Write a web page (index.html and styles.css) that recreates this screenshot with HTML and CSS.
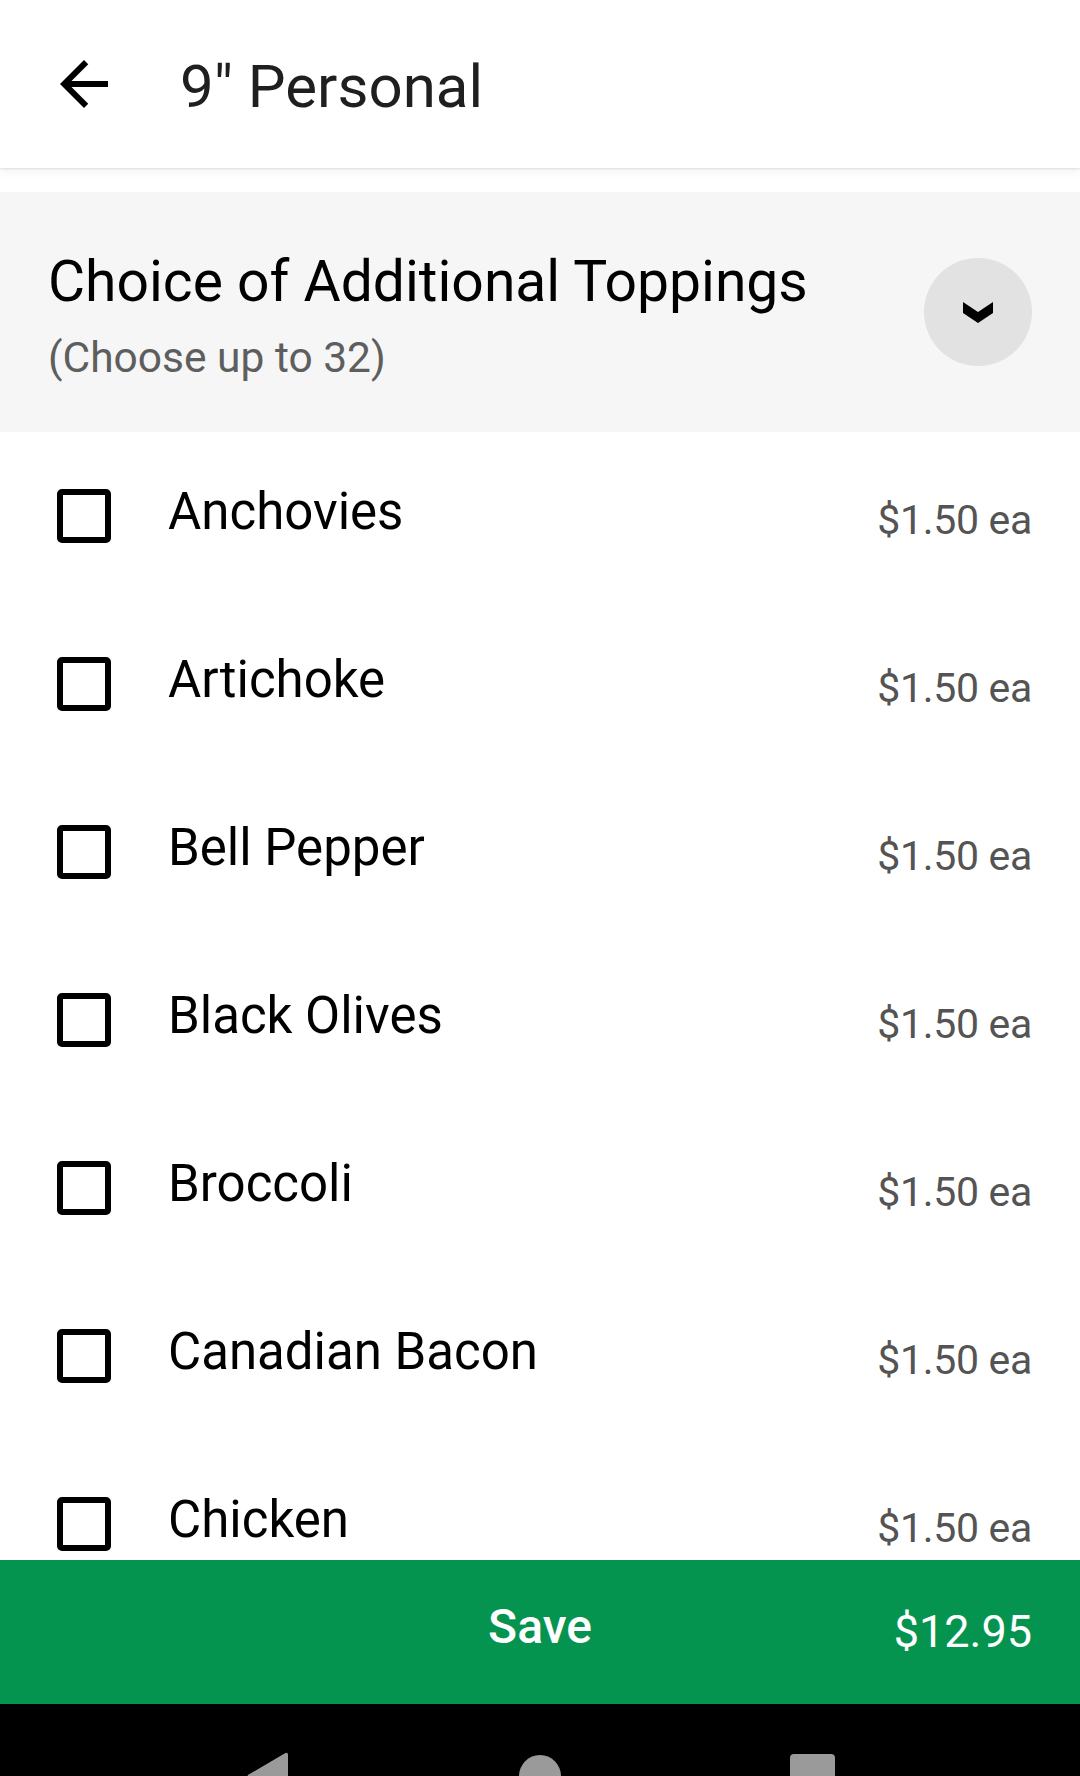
FILE: index.html
```html
<!DOCTYPE html>
<html lang="en">
<head>
<meta charset="utf-8">
<title>9" Personal</title>
<link rel="stylesheet" href="styles.css">
</head>
<body>
<div class="app">
  <header class="topbar">
    <span class="icon-btn">
      <svg width="72" height="72" viewBox="0 0 24 24"><path d="M20 11H7.83l5.59-5.59L12 4l-8 8 8 8 1.41-1.41L7.83 13H20v-2z" fill="#000"/></svg>
    </span>
    <h1 class="topbar-title">9" Personal</h1>
  </header>

  <section class="group-head">
    <div class="group-text">
      <div class="group-title">Choice of Additional Toppings</div>
      <div class="group-sub">(Choose up to 32)</div>
    </div>
    <span class="collapse-btn">
      <svg width="108" height="108" viewBox="0 0 108 108"><polygon points="39,44 54,54 69,44 69,55 54,65 39,55" fill="#000"/></svg>
    </span>
  </section>

  <ul class="options">
    <li class="option"><span class="check-wrap"><span class="check"></span></span><span class="label">Anchovies</span><span class="price">$1.50 ea</span></li>
    <li class="option"><span class="check-wrap"><span class="check"></span></span><span class="label">Artichoke</span><span class="price">$1.50 ea</span></li>
    <li class="option"><span class="check-wrap"><span class="check"></span></span><span class="label">Bell Pepper</span><span class="price">$1.50 ea</span></li>
    <li class="option"><span class="check-wrap"><span class="check"></span></span><span class="label">Black Olives</span><span class="price">$1.50 ea</span></li>
    <li class="option"><span class="check-wrap"><span class="check"></span></span><span class="label">Broccoli</span><span class="price">$1.50 ea</span></li>
    <li class="option"><span class="check-wrap"><span class="check"></span></span><span class="label">Canadian Bacon</span><span class="price">$1.50 ea</span></li>
    <li class="option"><span class="check-wrap"><span class="check"></span></span><span class="label">Chicken</span><span class="price">$1.50 ea</span></li>
  </ul>

  <div class="savebar">
    <span></span>
    <span class="save-label">Save</span>
    <span class="save-price">$12.95</span>
  </div>

  <nav class="sysnav">
    <span class="nav-cell"><svg width="42" height="48" viewBox="0 0 42 48"><path d="M2 22.3 L38 1.3 Q41 -0.2 41 3 L41 45 Q41 48.2 38 46.7 L2 25.7 Q-0.9 24 2 22.3 Z" fill="#9a9a9a"/></svg></span>
    <span class="nav-cell"><span class="nav-home"></span></span>
    <span class="nav-cell"><span class="nav-recent"></span></span>
  </nav>
</div>
</body>
</html>
```

FILE: styles.css
```css
* { box-sizing: border-box; }
html, body {
  margin: 0;
  padding: 0;
  width: 1080px;
  height: 1776px;
  overflow: hidden;
  background: #fff;
  font-family: Roboto, "Liberation Sans", Arial, sans-serif;
}
.app {
  width: 1080px;
  height: 1776px;
  overflow: hidden;
  display: flex;
  flex-direction: column;
}
.topbar {
  position: relative;
  z-index: 2;
  flex: none;
  height: 168px;
  display: flex;
  align-items: center;
  padding-left: 48px;
  background: #fff;
  box-shadow: 0 1px 2px rgba(0,0,0,0.10), 0 4px 10px rgba(0,0,0,0.05);
}
.icon-btn {
  width: 72px;
  height: 72px;
  display: block;
}
.icon-btn svg { display: block; }
.topbar-title {
  margin: 0 0 0 60px;
  padding-top: 5px;
  font-size: 60px;
  font-weight: 400;
  line-height: 70px;
  color: #1f1f1f;
}
.group-head {
  flex: none;
  margin-top: 24px;
  height: 240px;
  background: #f6f6f6;
  display: flex;
  align-items: center;
  justify-content: space-between;
  padding: 0 48px;
}
.group-text {
  padding-top: 12px;
}
.group-title {
  font-size: 57px;
  line-height: 64px;
  color: #000;
}
.group-sub {
  margin-top: 16px;
  font-size: 42.5px;
  line-height: 56px;
  color: #5e5e5e;
}
.collapse-btn {
  width: 108px;
  height: 108px;
  border-radius: 50%;
  background: #e2e2e2;
  display: block;
}
.collapse-btn svg { display: block; }
.options {
  flex: none;
  height: 1128px;
  overflow: hidden;
  list-style: none;
  margin: 0;
  padding: 0;
}
.option {
  height: 168px;
  display: flex;
  align-items: center;
  padding: 0 48px;
}
.check-wrap {
  width: 72px;
  height: 72px;
  display: flex;
  align-items: center;
  justify-content: center;
  flex: none;
}
.check {
  width: 54px;
  height: 54px;
  border: 6px solid #000;
  border-radius: 5px;
  display: block;
}
.label {
  margin-left: 48px;
  margin-bottom: 8px;
  font-size: 51px;
  line-height: 60px;
  color: #000;
  flex: 1;
}
.price {
  margin-top: 8px;
  font-size: 41px;
  line-height: 48px;
  color: #545454;
  letter-spacing: -0.3px;
}
.savebar {
  flex: none;
  height: 144px;
  background: #05944f;
  display: grid;
  grid-template-columns: 1fr auto 1fr;
  align-items: center;
  padding: 0 48px;
  color: #fff;
}
.save-label {
  font-size: 48px;
  font-weight: 500;
  line-height: 48px;
  margin-bottom: 10px;
}
.save-price {
  justify-self: end;
  font-size: 45px;
  line-height: 48px;
}
.sysnav {
  flex: none;
  height: 144px;
  background: #000;
  display: flex;
  justify-content: center;
  align-items: center;
}
.nav-cell {
  width: 272px;
  height: 144px;
  display: flex;
  align-items: center;
  justify-content: center;
}
.nav-cell svg { display: block; }
.nav-home {
  width: 42px;
  height: 42px;
  border-radius: 50%;
  background: #9a9a9a;
  display: block;
}
.nav-recent {
  width: 45px;
  height: 45px;
  border-radius: 4px;
  background: #9a9a9a;
  display: block;
}
```
